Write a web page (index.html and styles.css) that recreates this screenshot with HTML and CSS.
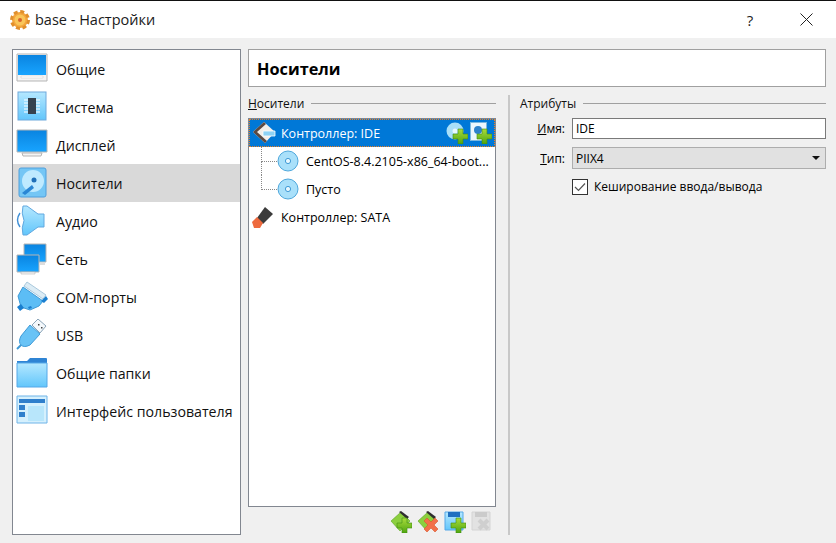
FILE: index.html
```html
<!DOCTYPE html>
<html lang="ru">
<head>
<meta charset="utf-8">
<title>base - Настройки</title>
<link rel="stylesheet" href="styles.css">
</head>
<body>
<svg class="defs" width="0" height="0">
  <defs>
    <linearGradient id="blue" x1="0" y1="0" x2="0" y2="1"><stop offset="0" stop-color="#0a84e0"/><stop offset="1" stop-color="#18a4ff"/></linearGradient>
    <linearGradient id="sky" x1="0" y1="0" x2="0" y2="1"><stop offset="0" stop-color="#b5e8ff"/><stop offset="1" stop-color="#62c6fb"/></linearGradient>
    <linearGradient id="grn" x1="0" y1="0" x2="0" y2="1"><stop offset="0" stop-color="#a8dc3c"/><stop offset="1" stop-color="#4fa510"/></linearGradient>
    <g id="plus"><path d="M5 0h5v5h5v5h-5v5H5v-5H0V5h5z" fill="url(#grn)" stroke="#3f8f10" stroke-width=".6"/></g>
    <g id="cross"><path d="M3 0l4 4 4-4 3 3-4 4 4 4-3 3-4-4-4 4-3-3 4-4-4-4z" fill="#f2704a" stroke="#d9552e" stroke-width=".6"/></g>
    <g id="disc"><circle cx="11" cy="11" r="10" fill="#a9e0fa" stroke="#4fa8dc"/><circle cx="11" cy="11" r="2.6" fill="#e8f8ff" stroke="#3f9ad6"/></g>
    <g id="chip"><path d="M11 1L1 10l9 10 10-10z" fill="#8ccf3e" stroke="#5aa520" stroke-width=".6"/><path d="M9 1l2-1 8 6-2 2z" fill="#2f2f2f"/></g>
  </defs>
</svg>
<div class="window">
  <header class="titlebar">
    <svg class="app-icon" viewBox="0 0 20 20"><circle cx="10" cy="10" r="8" fill="#f4a63c"/><circle cx="10" cy="10" r="8.500" fill="none" stroke="#e08f2c" stroke-width="3" stroke-dasharray="4 2.670"/><circle cx="10" cy="10" r="5.500" fill="#f9c65a"/><circle cx="10" cy="10" r="2" fill="#d9622a"/></svg>
    <span class="title">base - Настройки</span>
    <span class="help">?</span>
    <svg class="close" viewBox="0 0 13 13"><path d="M.5.5l12 12M12.500.5l-12 12" stroke="#222" fill="none"/></svg>
  </header>
  <div class="content">
    <nav class="sidebar">
      <div class="nav-item">
        <svg class="nav-icon" viewBox="0 0 32 32"><path d="M1 1h30v27H1z" fill="#f4f4f4" stroke="#b5b5b5"/><path d="M2 2h28v20H2z" fill="url(#blue)"/><path d="M5 23h22v2H5z" fill="#fff" stroke="#c8c8c8" stroke-width=".5"/></svg>
        <span>Общие</span>
      </div>
      <div class="nav-item">
        <svg class="nav-icon" viewBox="0 0 32 32"><rect x="2" y="1" width="28" height="28" fill="url(#sky)" stroke="#6fa9dc"/><path d="M8 9h16M8 12h16M8 15h16M8 18h16M8 21h16" stroke="#fff"/><rect x="12" y="7" width="8" height="16" fill="#36424e"/></svg>
        <span>Система</span>
      </div>
      <div class="nav-item">
        <svg class="nav-icon" viewBox="0 0 32 32"><path d="M1 1h30v22H1z" fill="url(#blue)" stroke="#b5b5b5"/><path d="M6 24h20l-1 3H7z" fill="#f4f4f4" stroke="#b5b5b5"/></svg>
        <span>Дисплей</span>
      </div>
      <div class="nav-item active">
        <svg class="nav-icon" viewBox="0 0 32 32"><rect x="3" y="1" width="27" height="29" rx="2" fill="#74c6f5" stroke="#4f9fdc"/><circle cx="17" cy="14" r="11" fill="#bfeaff"/><circle cx="18" cy="13" r="2.500" fill="#1f6fb8"/><path d="M6 26l10-8 2 3-9 7z" fill="#2a86d4"/></svg>
        <span>Носители</span>
      </div>
      <div class="nav-item">
        <svg class="nav-icon" viewBox="0 0 32 32"><path d="M7 1h4l11 8h6v13h-6L11 30H7q-2-7 1-14.500Q5 8 7 1z" fill="url(#sky)" stroke="#62a9e0"/><path d="M4 8q-5 7 0 14" fill="none" stroke="#3f8fd6" stroke-width="1.400"/></svg>
        <span>Аудио</span>
      </div>
      <div class="nav-item">
        <svg class="nav-icon" viewBox="0 0 32 32"><path d="M8 1h22v18H8z" fill="url(#blue)" stroke="#b5b5b5"/><path d="M1 12h22v17H1z" fill="url(#blue)" stroke="#b5b5b5"/><path d="M5 29h14v2H5z" fill="#f4f4f4" stroke="#b5b5b5" stroke-width=".6"/><path d="M24 20h5v2h-5z" fill="#ddd"/></svg>
        <span>Сеть</span>
      </div>
      <div class="nav-item">
        <svg class="nav-icon" viewBox="0 0 32 32"><path d="M11 1l19 13-3 4L8 5z" fill="#dcecf5" stroke="#a9c8dc"/><path d="M7 6l20 14-4 5-9 4-9-3-3-11z" fill="#5cbdf5" stroke="#3f9ad6"/><path d="M1 26l4-3 3 4-4 3zM25 20l5-5 2 3-4 4zM12 26l3-1 1 2-3 1z" fill="#1a7fd0"/></svg>
        <span>COM-порты</span>
      </div>
      <div class="nav-item">
        <svg class="nav-icon" viewBox="0 0 32 32"><path d="M22 0l8 7-6 7-8-8z" fill="#f4f8fb" stroke="#8aa4b8"/><path d="M22 5h1.500v1.500H22zM25 8h1.500v1.500H25z" fill="#444"/><path d="M14 6l10 9-10 11q-6 3-9 0t0-9z" fill="#69c3f6" stroke="#3f9ad6"/><path d="M5 26l-4 4" stroke="#3f9ad6" stroke-width="2"/></svg>
        <span>USB</span>
      </div>
      <div class="nav-item">
        <svg class="nav-icon" viewBox="0 0 32 32"><path d="M1 4h10l3-3h16a1 1 0 011 1v4H1z" fill="#2f84d4"/><path d="M1 6h30v24H1z" fill="url(#sky)" stroke="#55a8e8"/></svg>
        <span>Общие папки</span>
      </div>
      <div class="nav-item">
        <svg class="nav-icon" viewBox="0 0 32 32"><path d="M1 1h30v27H1z" fill="#d5f0fd" stroke="#6fb4e8"/><path d="M3 4h26v4H3z" fill="#2f7fcc"/><path d="M3 10h6v5H3zM3 17h6v5H3z" fill="#2f7fcc"/><path d="M12 11h16v15H12z" fill="#b8e6fb"/></svg>
        <span>Интерфейс пользователя</span>
      </div>
    </nav>
    <main class="main">
      <div class="page-title">Носители</div>
      <div class="panes">
        <section class="left-pane">
          <div class="group-head"><span><u>Н</u>осители</span><i class="rule"></i></div>
          <div class="tree">
            <div class="row ctrl selected">
              <svg class="ctrl-icon" viewBox="0 0 26 24"><path d="M13 1L2 11l12 11 10-11z" fill="#f2eeea"/><path d="M13 1L2 11l12 11 2-2-10-9 9-8z" fill="#5a4a44"/><path d="M12 10h12v5H12z" fill="#8ed2f5" stroke="#fff" stroke-width=".8"/></svg>
              <span class="label">Контроллер: IDE</span>
              <span class="row-tools">
                <svg class="tool-sm" viewBox="0 0 22 22"><circle cx="9" cy="9" r="8.500" fill="#a9dff8"/><circle cx="9" cy="9" r="2.500" fill="#e8f8ff"/><use href="#plus" transform="translate(7 7)"/></svg>
                <svg class="tool-sm" viewBox="0 0 22 22"><rect x=".5" y=".5" width="16" height="18" fill="#eaf7fe" stroke="#7ab8e0"/><circle cx="8" cy="8" r="4" fill="#2c82cc"/><use href="#plus" transform="translate(7 7)"/></svg>
              </span>
            </div>
            <div class="row child first">
              <svg class="disc" viewBox="0 0 22 22"><use href="#disc"/></svg>
              <span class="label">CentOS-8.4.2105-x86_64-boot...</span>
            </div>
            <div class="row child last">
              <svg class="disc" viewBox="0 0 22 22"><use href="#disc"/></svg>
              <span class="label">Пусто</span>
            </div>
            <div class="row ctrl">
              <svg class="ctrl-icon" viewBox="0 0 26 24"><path d="M14 2l8 7-10 10-6-6z" fill="#3b3b3b"/><path d="M1 17l5-5 6 6-3 5-6 0z" fill="#ee6a3e"/></svg>
              <span class="label">Контроллер: SATA</span>
            </div>
          </div>
          <div class="tree-tools">
            <svg class="tool" viewBox="0 0 22 22"><use href="#chip"/><use href="#plus" transform="translate(7 7)"/></svg>
            <svg class="tool" viewBox="0 0 22 22"><use href="#chip"/><use href="#cross" transform="translate(7 7)"/></svg>
            <svg class="tool" viewBox="0 0 22 22"><path d="M1 1h18v18H1z" fill="url(#sky)" stroke="#55a8e8"/><path d="M4 1h12v5H4z" fill="#1f6fc0"/><use href="#plus" transform="translate(7 7)"/></svg>
            <svg class="tool" viewBox="0 0 22 22"><path d="M1 1h18v18H1z" fill="#e2e2e2" stroke="#d4d4d4"/><path d="M4 1h12v5H4z" fill="#cbcbcb"/><path d="M8 9l9 9M17 9l-9 9" stroke="#cfcfcf" stroke-width="4"/></svg>
          </div>
        </section>
        <section class="right-pane">
          <div class="group-head"><span>Атрибуты</span><i class="rule"></i></div>
          <div class="form">
            <label class="field-label"><u>И</u>мя:</label>
            <div class="input">IDE</div>
            <label class="field-label"><u>Т</u>ип:</label>
            <div class="select"><span>PIIX4</span><i class="arrow"></i></div>
            <span></span>
            <div class="check">
              <svg class="box" viewBox="0 0 16 16"><rect x=".5" y=".5" width="15" height="15" fill="#fff" stroke="#333"/><path d="M3 8l3.500 3.500L13 4.500" fill="none" stroke="#555" stroke-width="1.200"/></svg>
              <span>Кеширование ввода/вывода</span>
            </div>
          </div>
        </section>
      </div>
    </main>
  </div>
</div>
</body>
</html>
```
FILE: styles.css
```css
* { box-sizing: border-box; }
html, body { margin: 0; padding: 0; }
body {
  width: 836px;
  height: 543px;
  overflow: hidden;
  font-family: "Open Sans", "Noto Sans", sans-serif;
  font-size: 12px;
  color: #000;
  background: #f0f0f0;
}
.defs { position: absolute; }
.window { height: 543px; display: flex; flex-direction: column; border-top: 1px solid #111; }
.titlebar {
  height: 37px;
  flex: none;
  background: #fff;
  display: flex;
  align-items: center;
  padding-left: 10px;
}
.app-icon { width: 20px; height: 20px; flex: none; }
.title { margin-left: 5px; font-size: 14.500px; color: #1a1a1a; flex: 1; }
.help { width: 16px; font-size: 15px; color: #222; margin-right: 42px; text-align: center; }
.close { width: 13px; height: 13px; margin-right: 23px; flex: none; }
.content {
  flex: 1;
  display: flex;
  gap: 7px;
  padding: 11px 10px 8px 12px;
  min-height: 0;
}
.sidebar {
  width: 229px;
  flex: none;
  background: #fff;
  border: 1px solid #828790;
}
.nav-item {
  height: 38px;
  display: flex;
  align-items: center;
  padding-left: 3px;
  gap: 8px;
  font-size: 14.200px;
  color: #111;
  white-space: nowrap;
}
.nav-item.active { background: #d9d9d9; }
.nav-icon { width: 32px; height: 32px; flex: none; }
.main { flex: 1; display: flex; flex-direction: column; min-width: 0; }
.page-title {
  height: 38px;
  flex: none;
  background: #fff;
  border: 1px solid #a0a0a0;
  display: flex;
  align-items: center;
  padding: 1px 0 0 8px;
  font-size: 16.300px;
  font-weight: 700;
}
.panes { flex: 1; display: flex; min-height: 0; padding-top: 8px; }
.left-pane { width: 248px; flex: none; display: flex; flex-direction: column; }
.right-pane {
  flex: 1;
  margin-left: 12px;
  border-left: 2px solid #c8c8c8;
  padding-left: 10px;
  min-width: 0;
}
.group-head {
  height: 16px;
  margin-bottom: 7px;
  display: flex;
  align-items: center;
  gap: 7px;
  color: #111;
  font-size: 12px;
}
.rule { flex: 1; height: 1px; background: #a0a0a0; }
.tree {
  flex: 1;
  background: #fff;
  border: 1px solid #828790;
  min-height: 0;
}
.row { height: 28px; display: flex; align-items: center; white-space: nowrap; position: relative; }
.row .label { font-size: 12.500px; }
.ctrl { padding-left: 2px; }
.ctrl-icon { width: 26px; height: 24px; flex: none; margin-right: 4px; }
.selected {
  background: #0078d7;
  color: #fff;
  outline: 1px dotted #f08020;
  outline-offset: -1px;
}
.row-tools { position: absolute; right: 3px; top: 3px; display: flex; gap: 2px; }
.tool-sm { width: 22px; height: 22px; }
.child { padding-left: 28px; }
.disc { width: 22px; height: 22px; flex: none; margin-right: 7px; }
.child::before {
  content: "";
  position: absolute;
  left: 12px;
  width: 15px;
  top: 0;
  height: 14px;
  border-left: 1px dotted #888;
  border-bottom: 1px dotted #888;
}
.first::after {
  content: "";
  position: absolute;
  left: 12px;
  top: 14px;
  height: 14px;
  border-left: 1px dotted #888;
}
.tree-tools {
  height: 28px;
  flex: none;
  display: flex;
  justify-content: flex-end;
  align-items: center;
  gap: 5px;
  padding: 2px 3px 0 0;
}
.tool { width: 22px; height: 22px; }
.form {
  display: grid;
  grid-template-columns: 45px 1fr;
  column-gap: 7px;
  row-gap: 8px;
  align-items: center;
}
.field-label { text-align: right; }
.input {
  height: 21px;
  background: #fff;
  border: 1px solid #7a7a7a;
  display: flex;
  align-items: center;
  padding-left: 3px;
}
.select {
  height: 22px;
  background: #e1e1e1;
  border: 1px solid #adadad;
  display: flex;
  align-items: center;
  justify-content: space-between;
  padding: 0 5px 0 3px;
}
.arrow {
  width: 0;
  height: 0;
  border-left: 4px solid transparent;
  border-right: 4px solid transparent;
  border-top: 4px solid #111;
}
.check { display: flex; align-items: center; gap: 6px; margin-top: 1px; }
.box { width: 16px; height: 16px; flex: none; }
```
